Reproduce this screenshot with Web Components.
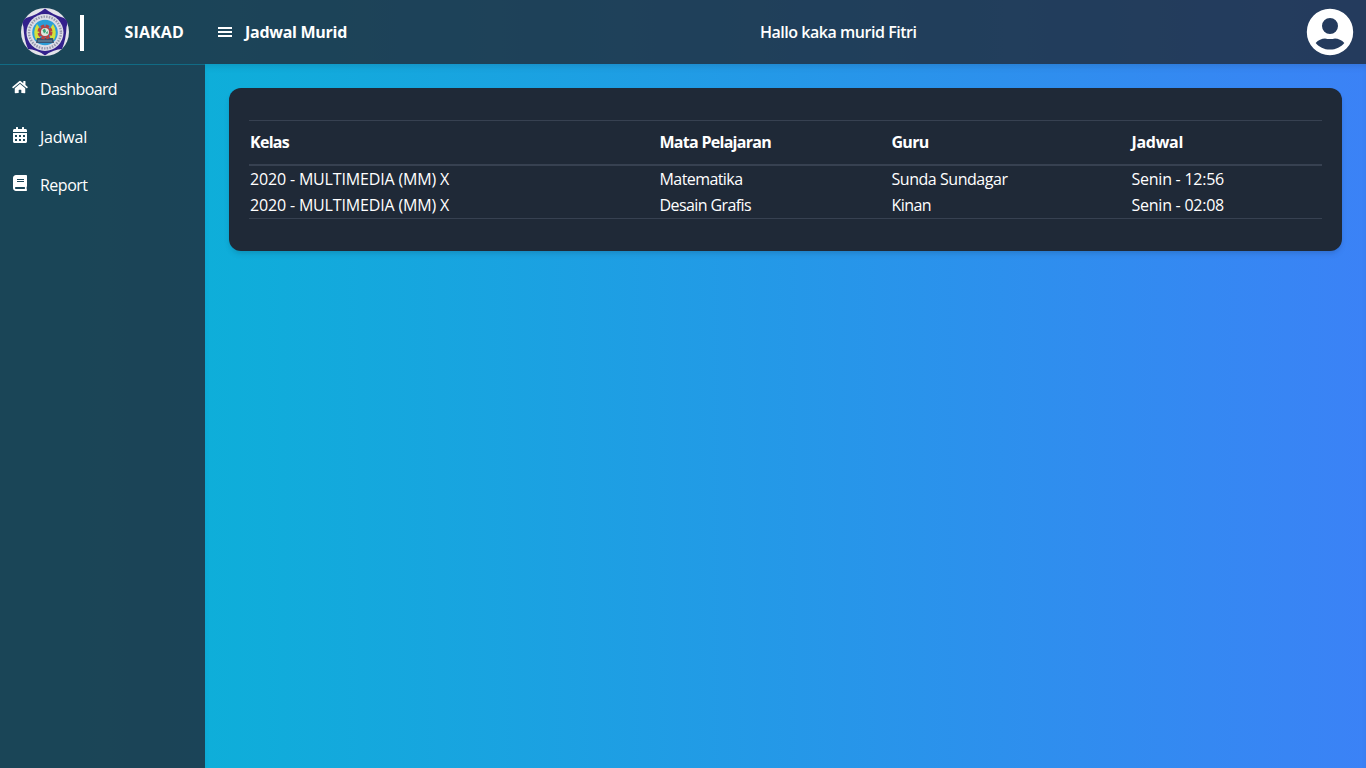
<!DOCTYPE html>
<html lang="id">
<head>
<meta charset="utf-8">
<title>SIAKAD</title>
<style>
html,body{margin:0;height:100%;overflow:hidden}
body{font:16px/24px "Segoe UI","Open Sans","Noto Sans",sans-serif;color:#fff;background:linear-gradient(to right,#06b6d4,#3b82f6)}
</style>
</head>
<body>
<app-shell></app-shell>
<script>
const define = (name, html, ready) => customElements.define(name, class extends HTMLElement {
  constructor() {
    super();
    const t = document.createElement('template');
    t.innerHTML = html;
    this.attachShadow({mode: 'open'}).append(t.content.cloneNode(true));
  }
  connectedCallback() { if (ready) ready(this); }
});

/* A single-line label whose tracking is adjusted to a given width. */
define('fit-text', `<style>:host{display:inline-block;white-space:nowrap}span{display:inline-block}</style><span><slot></slot></span>`, el => {
  const s = el.shadowRoot.querySelector('span');
  const w = +el.getAttribute('w');
  el.style.width = w + 'px';
  s.style.letterSpacing = (w - s.getBoundingClientRect().width) / el.textContent.length + 'px';
});

define('school-logo', `<style>:host{display:block;width:50px;height:50px}svg{display:block}</style>
<svg width="50" height="50" viewBox="0 0 50 50">
<circle cx="25" cy="25" r="24" fill="#e4e3ea"/>
<path d="M25 1.500Q32 7.500 44 11Q49 14 46.500 20Q46 33 42 42Q34 42 25 48.500Q16 42 8 42Q4 33 3.500 20Q1 14 6 11Q18 7.500 25 1.500Z" fill="#33208c"/>
<circle cx="25" cy="25.500" r="18.500" fill="#dcdde6"/>
<circle cx="25" cy="25.500" r="15.900" fill="none" stroke="#9698ac" stroke-width="2.400" stroke-dasharray="1.500 1.200"/>
<circle cx="25" cy="25.500" r="12.800" fill="#2b9ed8"/>
<path d="M17 17Q12 25 16 33L20 31L19 20ZM33 17Q38 25 34 33L30 31L31 20Z" fill="#d3e03a"/>
<path d="M17 31H33L34 36H16Z" fill="#3b5573"/>
<circle cx="25" cy="25" r="6.200" fill="none" stroke="#b9423f" stroke-width="2.600" stroke-dasharray="3.400 1.460"/>
<circle cx="25" cy="25" r="5.600" fill="#b04247"/><circle cx="25" cy="25" r="4" fill="#dce9e0"/>
<path d="M22.500 23L25 21.500L26 24.500L24 26.500ZM25.500 26L28 24L27.500 27Z" fill="#38a473"/>
<path d="M18 34H32" stroke="#7795a6"/>
</svg>`);

const icons = {
  home: ['0 0 576 512', 16, 14, 'M280.400 148.300L96 300.100V464a16 16 0 0 0 16 16l112-.3a16 16 0 0 0 16-16V368a16 16 0 0 1 16-16h64a16 16 0 0 1 16 16v95.600a16 16 0 0 0 16 16L464 480a16 16 0 0 0 16-16V300L295.700 148.300a12.200 12.200 0 0 0-15.300 0zM571.600 251.500L488 182.600V44a12 12 0 0 0-12-12h-56a12 12 0 0 0-12 12v72.600L318.500 43a48 48 0 0 0-61 0L4.300 251.500a12 12 0 0 0-1.600 16.900l25.500 31a12 12 0 0 0 16.900 1.600L280.400 107.300a12.200 12.200 0 0 1 15.300 0L531 301a12 12 0 0 0 16.900-1.600l25.500-31a12 12 0 0 0-1.800-16.900z'],
  calendar: ['0 0 448 512', 14, 16, 'M0 464c0 26.500 21.500 48 48 48h352c26.500 0 48-21.500 48-48V192H0v272zm320-196c0-6.600 5.400-12 12-12h40c6.600 0 12 5.400 12 12v40c0 6.600-5.400 12-12 12h-40c-6.600 0-12-5.400-12-12v-40zm0 128c0-6.600 5.400-12 12-12h40c6.600 0 12 5.400 12 12v40c0 6.600-5.400 12-12 12h-40c-6.600 0-12-5.400-12-12v-40zM192 268c0-6.600 5.400-12 12-12h40c6.600 0 12 5.400 12 12v40c0 6.600-5.400 12-12 12h-40c-6.600 0-12-5.400-12-12v-40zm0 128c0-6.600 5.400-12 12-12h40c6.600 0 12 5.400 12 12v40c0 6.600-5.400 12-12 12h-40c-6.600 0-12-5.400-12-12v-40zM64 268c0-6.600 5.400-12 12-12h40c6.600 0 12 5.400 12 12v40c0 6.600-5.400 12-12 12H76c-6.600 0-12-5.400-12-12v-40zm0 128c0-6.600 5.400-12 12-12h40c6.600 0 12 5.400 12 12v40c0 6.600-5.400 12-12 12H76c-6.600 0-12-5.400-12-12v-40zM400 64h-48V16c0-8.800-7.200-16-16-16h-32c-8.800 0-16 7.200-16 16v48H160V16c0-8.800-7.200-16-16-16h-32c-8.800 0-16 7.200-16 16v48H48C21.500 64 0 85.500 0 112v48h448v-48c0-26.500-21.500-48-48-48z'],
  book: ['0 0 448 512', 14, 16, 'M448 360V24c0-13.300-10.700-24-24-24H96C43 0 0 43 0 96v320c0 53 43 96 96 96h328c13.300 0 24-10.700 24-24v-16c0-7.500-3.500-14.300-8.900-18.700-4.200-15.400-4.200-59.300 0-74.700 5.400-4.300 8.900-11.100 8.900-18.600zM128 134c0-3.300 2.700-6 6-6h212c3.300 0 6 2.700 6 6v20c0 3.300-2.700 6-6 6H134c-3.300 0-6-2.700-6-6v-20zm0 64c0-3.300 2.700-6 6-6h212c3.300 0 6 2.700 6 6v20c0 3.300-2.700 6-6 6H134c-3.300 0-6-2.700-6-6v-20zm253.400 250H96c-17.700 0-32-14.300-32-32 0-17.600 14.400-32 32-32h285.400c-1.900 17.100-1.900 46.900 0 64z']
};

define('nav-item', `<style>:host{display:grid;grid-template-columns:16px 1fr;column-gap:12px;height:48px;padding:0 12px;align-items:center;box-sizing:border-box}
i{display:grid;place-items:center;height:16px;margin-top:-5px}svg{display:block}</style><i></i><span><slot></slot></span>`, el => {
  const [box, w, h, d] = icons[el.getAttribute('icon')];
  el.shadowRoot.querySelector('i').innerHTML = `<svg viewBox="${box}" width="${w}" height="${h}" fill="#fff"><path d="${d}"/></svg>`;
});

define('side-bar', `<style>:host{display:block;background:rgba(31,41,55,.8);box-sizing:border-box}
header{height:64px;border-bottom:1px solid rgba(8,145,178,.5);display:flex;align-items:center;padding-left:20px;font-weight:700}
.bar{width:4px;height:36px;background:#fff;margin:2px 0 0 10px}
header fit-text{margin-left:40.500px}
nav{display:block}</style>
<header><school-logo></school-logo><div class="bar"></div><fit-text w="59.500">SIAKAD</fit-text></header>
<nav><nav-item icon="home"><fit-text w="77">Dashboard</fit-text></nav-item>
<nav-item icon="calendar"><fit-text w="47">Jadwal</fit-text></nav-item>
<nav-item icon="book"><fit-text w="47.500">Report</fit-text></nav-item></nav>`);

define('top-bar', `<style>:host{display:flex;height:64px;align-items:center;background:rgba(31,41,55,.8);padding:0 12px 0 13px;box-sizing:border-box;font-weight:700}
.menu{width:14px;margin-right:13px}
.hello{font-weight:600;margin-left:413px}.user{margin-left:auto;display:block}</style>
<svg class="menu" width="14" height="10" viewBox="0 0 14 10" fill="#fff"><path d="M0 0h14v2H0zM0 4h14v2H0zM0 8h14v2H0z"/></svg>
<fit-text w="102">Jadwal Murid</fit-text><fit-text class="hello" w="156.500">Hallo kaka murid Fitri</fit-text>
<svg class="user" width="48" height="48" viewBox="0 0 48 48"><path fill="#fff" fill-rule="evenodd" d="M24 .8a23.200 23.200 0 1 0 0 46.400A23.200 23.200 0 0 0 24 .8M24 10a8 8 0 1 1 0 16a8 8 0 0 1 0-16M9.700 35C12 32 16 30.700 19 30.500Q24 31.500 29 30.500C32 30.700 36 32 38.300 35C35 39 30 41.600 24 41.600S13 39 9.700 35Z"/></svg>`);

define('schedule-table', `<style>:host{display:block;border-top:1px solid #374151;border-bottom:1px solid #374151}
.row{display:grid;grid-template-columns:409.500px 232px 240px 1fr;height:26px;align-items:center;padding-left:1px}
.head{height:42px;padding-bottom:1px;border-bottom:2px solid #374151;font-weight:700}</style>
<div class="row head"><fit-text w="39">Kelas</fit-text><fit-text w="111.500">Mata Pelajaran</fit-text><fit-text w="37">Guru</fit-text><fit-text w="51.500">Jadwal</fit-text></div>
<div class="row"><fit-text w="199">2020 - MULTIMEDIA (MM) X</fit-text><fit-text w="83">Matematika</fit-text><fit-text w="116">Sunda Sundagar</fit-text><fit-text w="92.500">Senin - 12:56</fit-text></div>
<div class="row"><fit-text w="199">2020 - MULTIMEDIA (MM) X</fit-text><fit-text w="91.500">Desain Grafis</fit-text><fit-text w="39.500">Kinan</fit-text><fit-text w="92.500">Senin - 02:08</fit-text></div>`);

define('content-card', `<style>:host{display:block;background:#1f2937;border-radius:12px;padding:32px 20px;box-shadow:0 4px 6px -1px rgba(0,0,0,.1),0 2px 4px -1px rgba(0,0,0,.06)}</style><slot></slot>`);

define('app-shell', `<style>:host{display:grid;grid-template-columns:205px 1fr;height:100vh}
main{padding:24px;box-shadow:inset 0 5px 7px -3px rgba(0,0,0,.13)}section{display:grid;grid-template-rows:64px 1fr;min-width:0}</style>
<side-bar></side-bar><section><top-bar></top-bar><main><content-card><schedule-table></schedule-table></content-card></main></section>`);
</script>
</body>
</html>
